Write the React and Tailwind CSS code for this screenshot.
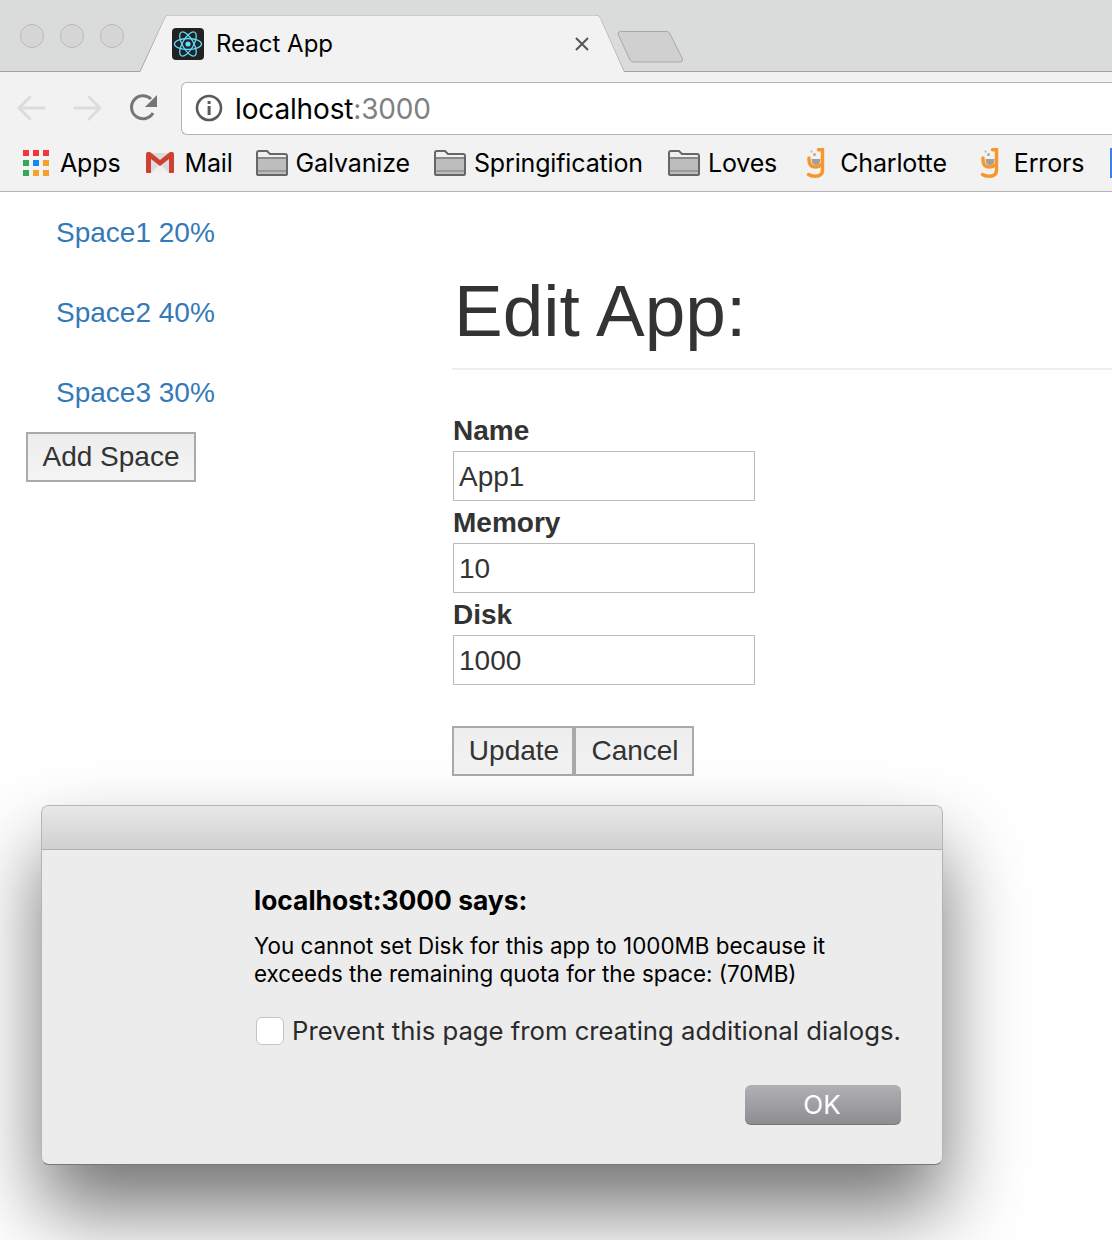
import React from 'react';

const FOLDERS = [
  { name: 'Galvanize', gap: 'ml-[23px]' },
  { name: 'Springification', gap: 'ml-[24px]' },
  { name: 'Loves', gap: 'ml-[25px]' },
];

function ReactIcon() {
  return (
    <svg width="32" height="32" viewBox="0 0 32 32" className="shrink-0">
      <rect width="32" height="32" rx="4" fill="#222222" />
      <g fill="none" stroke="#61dafb" strokeWidth="1.3">
        <ellipse cx="16" cy="16" rx="13.5" ry="5.5" />
        <ellipse cx="16" cy="16" rx="13.5" ry="5.5" transform="rotate(60 16 16)" />
        <ellipse cx="16" cy="16" rx="13.5" ry="5.5" transform="rotate(120 16 16)" />
      </g>
      <circle cx="16" cy="16" r="2.6" fill="#61dafb" />
    </svg>
  );
}

function AppsIcon() {
  const colors = ['#f4333c', '#f4333c', '#f4333c', '#34a853', '#1a88e8', '#f4a12e', '#34a853', '#f4a12e', '#f4a12e'];
  return (
    <div className="grid grid-cols-3 gap-[4px] w-[26px] shrink-0">
      {colors.map((c, i) => (
        <div key={i} className="w-[6px] h-[6px]" style={{ background: c }} />
      ))}
    </div>
  );
}

function GmailIcon() {
  return (
    <svg width="28" height="21" viewBox="0 0 28 21" className="shrink-0">
      <path d="M1 1 H27 V21 H1 Z" fill="#dcdcdc" />
      <path d="M5 21 L14 12 L23 21 Z" fill="#efefef" />
      <path d="M0 2 Q0 0 2 0 H4 L14 8 L24 0 H26 Q28 0 28 2 V20 Q28 21 27 21 H23 V7 L14 14 L5 7 V21 H1 Q0 21 0 20 Z" fill="#cf3f33" />
    </svg>
  );
}

function FolderIcon() {
  return (
    <svg width="32" height="26" viewBox="0 0 32 26" className="shrink-0">
      <path d="M1 24 V3 Q1 1 3 1 H11 L14 4 H29 Q31 4 31 6 V24 Q31 25 30 25 H2 Q1 25 1 24 Z" fill="#f0f0f0" stroke="#666666" strokeWidth="2" />
      <path d="M2 9 H30 V24 H2 Z" fill="#bdbdbd" />
      <path d="M1.5 8 H30.5" stroke="#666666" strokeWidth="1.5" />
      <path d="M2 21 H30" stroke="#9a9a9a" strokeWidth="2" />
    </svg>
  );
}

function JugIcon() {
  return (
    <svg width="20" height="30" viewBox="0 0 20 30" className="shrink-0">
      <path d="M12.5 1.7 H16.5 V22 Q16.5 28.3 9 28.3 Q5 28.3 2.5 26.5" fill="none" stroke="#f7962b" strokeWidth="3.4" strokeLinecap="round" />
      <path d="M3 10 V12 Q3 19 10 19 Q13 19 16 16" fill="none" stroke="#f7962b" strokeWidth="3.4" strokeLinecap="round" />
      <path d="M5.5 11 H14.5 Q14.5 17.2 10 17.2 Q5.5 17.2 5.5 11 Z" fill="#a89f94" />
      <circle cx="8.5" cy="6.5" r="1.5" fill="#b0a99f" />
      <circle cx="5.5" cy="3.5" r="1.2" fill="#c9c3ba" />
    </svg>
  );
}

function BookmarkText({ children, className = '' }) {
  return <span className={`block pt-[2px] text-[25px] leading-none tracking-[-0.15px] text-black whitespace-nowrap ${className}`}>{children}</span>;
}

function TabBar() {
  return (
    <div className="relative h-[72px] bg-[#dadbdb] flex items-start">
      {/* tab outline */}
      <svg width="1112" height="72" viewBox="0 0 1112 72" className="absolute inset-0">
        <path d="M0 71.5 H140 L165 18 Q166 15.5 169 15.5 H596 Q599 15.5 600 18 L624 71.5 H1112" fill="none" stroke="#a3a3a3" strokeWidth="1" />
        <path d="M140.5 72 L165 18 Q166 15.5 169 15.5 H596 Q599 15.5 600 18 L624 72 Z" fill="#f2f2f2" />
        <path d="M618 34 Q618 31.5 621 31.5 H667 Q669 31.5 670 34 L682.5 59 Q683 62 680 62 H634 Q631 62 630 60 Z" fill="#d0d0d0" stroke="#a8a8a8" />
      </svg>
      <div className="relative flex items-center gap-4 pl-5 pt-6">
        {[0, 1, 2].map((i) => (
          <div key={i} className="w-6 h-6 rounded-full bg-[#d6d6d6] border border-[#b9b9b9]" />
        ))}
      </div>
      <div className="relative flex items-center ml-[48px] pt-7 w-[418px]">
        <ReactIcon />
        <span className="ml-3 text-[24px] leading-8 text-black">React App</span>
        <svg width="16" height="16" viewBox="0 0 16 16" className="ml-auto">
          <path d="M2 2 L14 14 M14 2 L2 14" stroke="#555555" strokeWidth="2" />
        </svg>
      </div>
    </div>
  );
}

function Toolbar() {
  return (
    <div className="bg-[#f2f2f2] h-[120px] border-b border-[#b4b4b4]">
      <div className="flex items-center h-[62px] pt-[10px]">
        <div className="flex items-center gap-[23px] pl-[16px] w-[181px]">
          <svg width="32" height="28" viewBox="0 0 32 28" className="shrink-0">
            <path d="M28 14 H4 M14 3 L3 14 L14 25" fill="none" stroke="#dcdcdc" strokeWidth="3" strokeLinecap="round" />
          </svg>
          <svg width="32" height="28" viewBox="0 0 32 28" className="shrink-0">
            <path d="M4 14 H28 M18 3 L29 14 L18 25" fill="none" stroke="#dcdcdc" strokeWidth="3" strokeLinecap="round" />
          </svg>
          <svg width="30" height="30" viewBox="0 0 30 30" className="shrink-0 ml-[3px]">
            <path d="M24 20 A11.5 11.5 0 1 1 22 6" fill="none" stroke="#757575" strokeWidth="3" />
            <path d="M28 2 V14 H16 Z" fill="#757575" />
          </svg>
        </div>
        <div className="flex-1 h-[53px] bg-white border border-r-0 border-[#b5b5b5] rounded-l-md flex items-center pl-[13px]">
          <svg width="28" height="28" viewBox="0 0 28 28" className="shrink-0">
            <circle cx="14" cy="14" r="12" fill="none" stroke="#5a5a5a" strokeWidth="2.6" />
            <rect x="12.6" y="12" width="3" height="9" fill="#5a5a5a" />
            <rect x="12.6" y="7" width="3" height="3" fill="#5a5a5a" />
          </svg>
          <span className="ml-3 pt-[2px] text-[28px] leading-none tracking-[-0.15px] text-black">
            localhost<span className="text-[#808080]">:3000</span>
          </span>
        </div>
      </div>
      <div className="flex items-center h-[57px] pl-[23px]">
        <AppsIcon />
        <BookmarkText className="ml-[11px]">Apps</BookmarkText>
        <div className="ml-[26px]"><GmailIcon /></div>
        <BookmarkText className="ml-[10px]">Mail</BookmarkText>
        {FOLDERS.map(({ name, gap }) => (
          <div key={name} className={`flex items-center gap-2 ${gap}`}>
            <FolderIcon />
            <BookmarkText>{name}</BookmarkText>
          </div>
        ))}
        <div className="ml-[29px]"><JugIcon /></div>
        <BookmarkText className="ml-[14px]">Charlotte</BookmarkText>
        <div className="ml-[33px]"><JugIcon /></div>
        <BookmarkText className="ml-[14px]">Errors</BookmarkText>
        <div className="ml-[26px] shrink-0 w-[4px] h-[30px] bg-[#3b82e8]" />
      </div>
    </div>
  );
}

function PlainButton({ children, className = '' }) {
  return (
    <button className={`h-[50px] border-2 border-[#aaaaaa] bg-gradient-to-b from-[#ededed] to-[#f4f4f4] text-[28px] text-[#333333] leading-none ${className}`}>
      {children}
    </button>
  );
}

function Field({ label, value }) {
  return (
    <div className="flex flex-col">
      <label className="pt-[1px] text-[28px] leading-[41px] font-bold text-[#333333]">{label}</label>
      <input
        readOnly
        value={value}
        className="w-[302px] h-[50px] border border-[#bbbbbb] bg-white px-[5px] pt-[1px] text-[28px] text-[#333333] outline-none"
      />
    </div>
  );
}

function Page() {
  return (
    <div className="flex font-['Liberation_Sans',sans-serif]">
      <div className="w-[452px] pl-[26px]">
        <div className="flex flex-col pl-[30px]">
          {['Space1 20%', 'Space2 40%', 'Space3 30%'].map((s) => (
            <a key={s} className="h-[80px] pt-[21px] text-[28px] leading-[40px] text-[#337ab7]">{s}</a>
          ))}
        </div>
        <PlainButton className="w-[170px]">Add Space</PlainButton>
      </div>
      <div className="flex-1">
        <h1 className="pt-[74px] text-[73px] leading-[90px] text-[#333333] pl-[2px] h-[178px] border-b-2 border-[#eeeeee]">Edit App:</h1>
        <div className="pl-[1px] pt-[39px] flex flex-col">
          <Field label="Name" value="App1" />
          <Field label="Memory" value="10" />
          <Field label="Disk" value="1000" />
        </div>
        <div className="flex mt-[41px]">
          <PlainButton className="w-[122px] pl-[2px]">Update</PlainButton>
          <PlainButton className="w-[120px] pl-[2px]">Cancel</PlainButton>
        </div>
      </div>
    </div>
  );
}

function AlertDialog() {
  return (
    <div className="absolute left-[41px] top-[805px] w-[902px] h-[360px] rounded-[8px] bg-[#ececec] border border-[#b5b5b5] border-b-[#777777] shadow-[0_45px_80px_rgba(0,0,0,0.55)] overflow-hidden font-['Inter',sans-serif]">
      <div className="h-[44px] bg-gradient-to-b from-[#e9e8e9] to-[#d1d0d1] border-b border-[#b0b0b0]" />
      <div className="pl-[212px] pt-[34px] pr-[40px]">
        <div className="text-[26.4px] leading-[32px] font-bold text-black">localhost:3000 says:</div>
        <p className="mt-[16px] text-[22.4px] leading-[28px] text-black">
          You cannot set Disk for this app to 1000MB because it
          <br />
          exceeds the remaining quota for the space: (70MB)
        </p>
        <div className="flex items-center mt-[26px] ml-[2px]">
          <div className="shrink-0 w-[28px] h-[28px] rounded-[6px] bg-white border border-[#c4c4c4]" />
          <span className="ml-[8px] pt-[1px] text-[25.7px] leading-[32px] text-[#2a2a2a] whitespace-nowrap">Prevent this page from creating additional dialogs.</span>
        </div>
        <div className="flex justify-end mt-[38px] mr-[1px]">
          <button className="w-[156px] h-[40px] pt-[1px] pr-[2px] rounded-[6px] bg-gradient-to-b from-[#b1b0b4] to-[#8e8d91] border-b border-[#78777b] text-[26px] leading-none text-white">OK</button>
        </div>
      </div>
    </div>
  );
}

export default function App() {
  return (
    <div className="relative w-[1112px] h-[1240px] overflow-hidden bg-white">
      <div className="font-['Inter',sans-serif]">
        <TabBar />
        <Toolbar />
      </div>
      <Page />
      <AlertDialog />
    </div>
  );
}
